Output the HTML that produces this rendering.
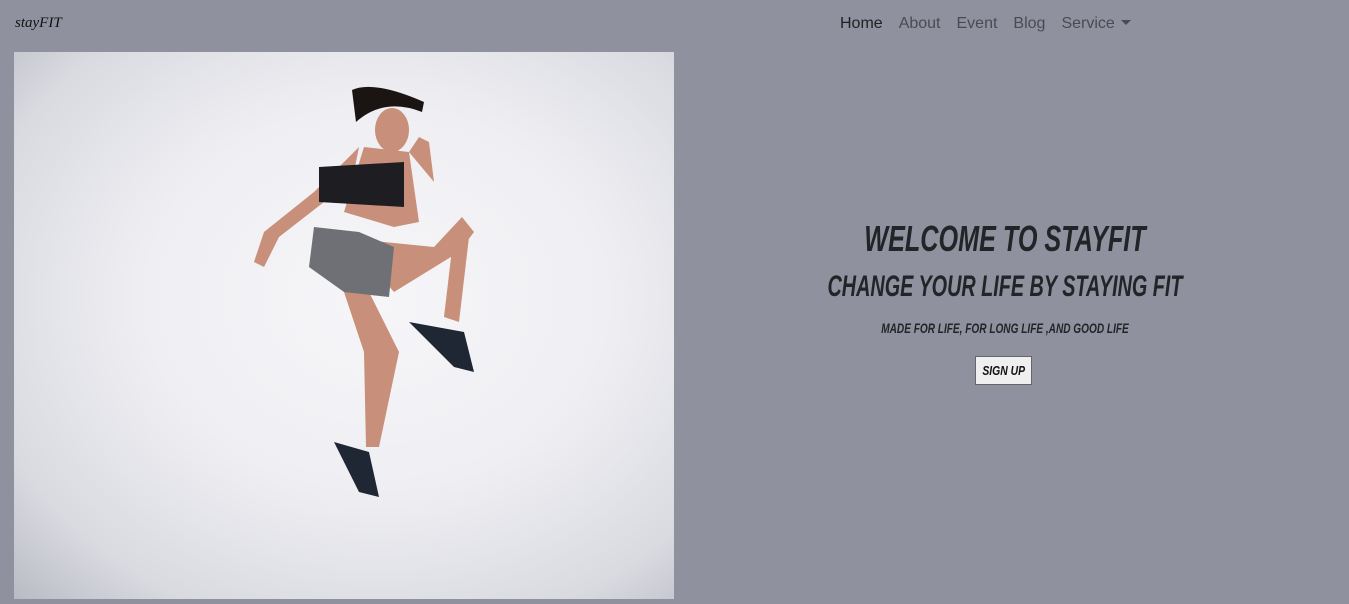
<!DOCTYPE html>
<html><head><style>
body{margin:0;width:1349px;height:599px;background:#8f919e;overflow:hidden;font-family:"Liberation Sans",sans-serif;position:relative}
.brand{position:absolute;left:15px;top:15px;font:italic 15px "Liberation Serif",serif;color:#111}
.nav{position:absolute;top:15px;left:840px;font-size:16px;color:#4a4b52;white-space:nowrap}
.nav span{margin-right:16px}
.nav .act{color:#1f2024}
.caret{display:inline-block;border-left:5px solid transparent;border-right:5px solid transparent;border-top:5px solid #4a4b52;vertical-align:3px;margin-left:6px}
.img{position:absolute;left:14px;top:52px;width:660px;height:547px;background:radial-gradient(ellipse at 55% 45%,#f6f6f9 0%,#efeff3 45%,#d9dae0 80%,#b9bbc4 100%)}
.t{position:absolute;left:0;width:2010px;text-align:center;font-weight:bold;font-style:italic;color:#232428;text-transform:uppercase;transform-origin:1005px 0;white-space:nowrap}
.b{position:absolute;left:975px;top:356px;width:57px;height:29px;background:#efefef;border:1px solid #666;box-sizing:border-box;text-align:center;line-height:27px;color:#111;white-space:nowrap;overflow:hidden}
.b span{display:inline-block;font:bold italic 13px "Liberation Sans",sans-serif;transform:scaleX(0.8)}
</style></head><body>
<div class="brand">stayFIT</div>
<div class="nav"><span class="act">Home</span><span>About</span><span>Event</span><span>Blog</span><span>Service<i class="caret"></i></span></div>
<div class="img">
<svg width="660" height="547" viewBox="0 0 660 547">
<g fill="#c88f7a">
<ellipse cx="378" cy="78" rx="17" ry="22"/>
<path d="M350 95 L395 100 L405 170 L380 175 L330 160 Z"/>
<path d="M300 185 L345 200 L380 240 L445 200 L460 180 L448 165 L420 195 L370 190 L330 185 Z"/>
<path d="M330 240 L355 240 L385 300 L365 395 L352 395 L350 300 Z"/>
<path d="M345 95 L300 140 L250 180 L240 210 L250 215 L265 185 L310 150 L340 120 Z"/>
<path d="M395 100 L420 130 L415 90 L405 85 Z"/>
<path d="M440 180 L430 265 L445 270 L455 185 Z"/>
</g>
<path d="M305 115 L390 110 L390 155 L305 150 Z" fill="#1e1e22"/>
<path d="M300 175 L345 180 L380 195 L375 245 L330 240 L295 215 Z" fill="#6f7075"/>
<path d="M395 270 L450 280 L460 320 L440 315 Z" fill="#1e2733"/>
<path d="M320 390 L355 400 L365 445 L345 440 Z" fill="#1e2733"/>
<path d="M338 38 Q360 28 410 50 L408 60 Q370 45 342 70 Z" fill="#1a1512"/>
</svg>
</div>
<div class="t" style="top:218px;font-size:36px;transform:scaleX(0.7)">Welcome to stayfit</div>
<div class="t" style="top:270px;font-size:30px;transform:scaleX(0.66)">Change your life by staying fit</div>
<div class="t" style="top:320px;font-size:14px;transform:scaleX(0.72)">made for life, for long life ,and good life</div>
<div class="b"><span>SIGN UP</span></div>
</body></html>
